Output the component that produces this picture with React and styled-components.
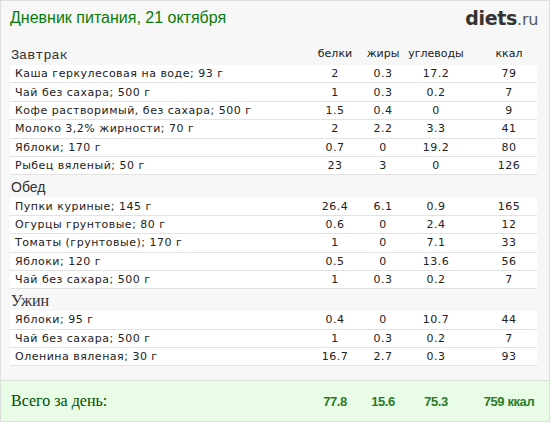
import React from "react"
import styled, { createGlobalStyle } from "styled-components"

const GlobalStyle = createGlobalStyle`
  html, body {
    margin: 0;
    padding: 0;
    background: #ffffff;
  }
`

const Page = styled.div`
  box-sizing: border-box;
  width: 550px;
  height: 422px;
  background-color: #f7f7f7;
  border: 1px solid #dedede;
  display: flex;
  flex-direction: column;
  font-family: "DejaVu Sans", Verdana, sans-serif;
  color: #222;
`

const Top = styled.div`
  display: flex;
  justify-content: space-between;
  align-items: center;
  height: 34px;
  padding: 0 11px 0 9px;
`

const Title = styled.h1`
  margin: 0;
  font-family: "Liberation Sans", Arial, sans-serif;
  font-weight: normal;
  font-size: 16px;
  color: #0a7a0a;
`

const Logo = styled.div`
  font-family: "DejaVu Sans", Verdana, sans-serif;
  font-size: 19px;
  font-weight: bold;
  color: #333;
  letter-spacing: -0.3px;
  span {
    font-weight: normal;
    font-size: 16px;
    color: #555;
  }
`

const Content = styled.div`
  flex: 1;
  padding: 0 12px 0 9px;
`

const Grid = styled.div`
  display: grid;
  grid-template-columns: 1fr 48px 48px 58px 72px;
  align-items: center;
`

const Head = styled(Grid)`
  height: 20px;
  margin-top: ${(p) => p.$top || 0}px;
`

const Section = styled.div`
  font-family: ${(p) => p.$font};
  font-size: ${(p) => p.$size}px;
  color: #333;
  padding-left: 1px;
`

const ColHead = styled.div`
  font-size: 11px;
  text-align: center;
  padding-left: ${(p) => (p.$last ? 16 : 0)}px;
  padding-bottom: 4px;
`

const Row = styled(Grid)`
  box-sizing: border-box;
  height: 18.4px;
  background: #ffffff;
  border-bottom: 1px solid #e2e2e2;
  font-size: 11px;
  letter-spacing: 0.5px;
`

const Name = styled.div`
  padding-left: 5px;
  white-space: nowrap;
`

const Num = styled.div`
  text-align: center;
  padding-left: ${(p) => (p.$last ? 16 : 0)}px;
`

const Footer = styled.div`
  height: 40px;
  border-top: 1px solid #dcdcdc;
  background-color: #e9fde6;
  padding: 0 12px 0 9px;
  display: flex;
  align-items: center;
`

const Total = styled(Grid)`
  width: 100%;
`

const TotalLabel = styled.div`
  font-family: "Liberation Serif", "Times New Roman", serif;
  font-size: 16px;
  color: #004d00;
  padding-left: 1px;
`

const TotalNum = styled.div`
  text-align: center;
  font-family: "Liberation Sans", Arial, sans-serif;
  font-weight: bold;
  font-size: 13px;
  letter-spacing: -0.4px;
  color: #2b7a2b;
  padding-left: ${(p) => (p.$last ? 16 : 0)}px;
`

const meals = [
  {
    title: "Завтрак",
    font: '"Liberation Mono", "Courier New", monospace',
    size: 13.5,
    top: 10,
    items: [
      ["Каша геркулесовая на воде; 93 г", "2", "0.3", "17.2", "79"],
      ["Чай без сахара; 500 г", "1", "0.3", "0.2", "7"],
      ["Кофе растворимый, без сахара; 500 г", "1.5", "0.4", "0", "9"],
      ["Молоко 3,2% жирности; 70 г", "2", "2.2", "3.3", "41"],
      ["Яблоки; 170 г", "0.7", "0", "19.2", "80"],
      ["Рыбец вяленый; 50 г", "23", "3", "0", "126"],
    ],
  },
  {
    title: "Обед",
    font: '"Liberation Sans", Arial, sans-serif',
    size: 14,
    top: 2,
    items: [
      ["Пупки куриные; 145 г", "26.4", "6.1", "0.9", "165"],
      ["Огурцы грунтовые; 80 г", "0.6", "0", "2.4", "12"],
      ["Томаты (грунтовые); 170 г", "1", "0", "7.1", "33"],
      ["Яблоки; 120 г", "0.5", "0", "13.6", "56"],
      ["Чай без сахара; 500 г", "1", "0.3", "0.2", "7"],
    ],
  },
  {
    title: "Ужин",
    font: '"Liberation Serif", "Times New Roman", serif',
    size: 16,
    top: 2,
    items: [
      ["Яблоки; 95 г", "0.4", "0", "10.7", "44"],
      ["Чай без сахара; 500 г", "1", "0.3", "0.2", "7"],
      ["Оленина вяленая; 30 г", "16.7", "2.7", "0.3", "93"],
    ],
  },
]

const App = () => {
  return (
    <>
      <GlobalStyle />
      <Page>
        <Top>
          <Title>Дневник питания, 21 октября</Title>
          <Logo>
            diets<span>.ru</span>
          </Logo>
        </Top>
        <Content>
          {meals.map((meal, i) => (
            <div key={meal.title}>
              <Head $top={meal.top}>
                <Section $font={meal.font} $size={meal.size}>
                  {meal.title}
                </Section>
                {i === 0 && (
                  <>
                    <ColHead>белки</ColHead>
                    <ColHead>жиры</ColHead>
                    <ColHead>углеводы</ColHead>
                    <ColHead $last>ккал</ColHead>
                  </>
                )}
              </Head>
              {meal.items.map((it, j) => (
                <Row key={j}>
                  <Name>{it[0]}</Name>
                  <Num>{it[1]}</Num>
                  <Num>{it[2]}</Num>
                  <Num>{it[3]}</Num>
                  <Num $last>{it[4]}</Num>
                </Row>
              ))}
            </div>
          ))}
        </Content>
        <Footer>
          <Total>
            <TotalLabel>Всего за день:</TotalLabel>
            <TotalNum>77.8</TotalNum>
            <TotalNum>15.6</TotalNum>
            <TotalNum>75.3</TotalNum>
            <TotalNum $last>759 ккал</TotalNum>
          </Total>
        </Footer>
      </Page>
    </>
  )
}

export default App
